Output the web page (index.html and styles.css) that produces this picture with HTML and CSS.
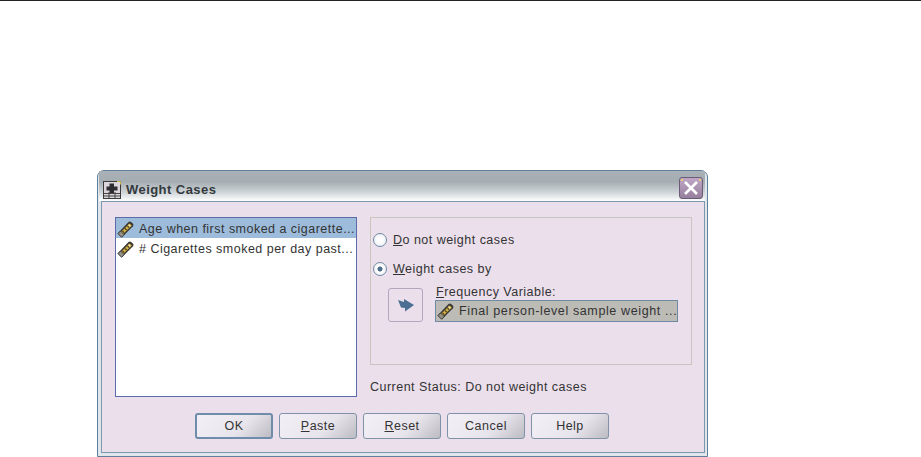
FILE: index.html
```html
<!DOCTYPE html>
<html lang="en">
<head>
    <meta charset="UTF-8">
    <title>Weight Cases</title>
    <link rel="stylesheet" href="styles.css">
</head>
<body>
<svg class="defs" width="0" height="0">
    <symbol id="ruler" viewBox="0 0 17 17">
        <path d="M.5 12.5 L11.5 1 Q13 0 14.2 1 L16 2.8 Q17 4 16 5.2 L4.8 16.5 Z" fill="#3b3a36"/>
        <path d="M2.5 12.5 L12.6 2.4 L14.8 4.4 L4.6 14.6 Z" fill="#d6b23f"/>
        <path d="M5.5 10 L7.2 11.7 M8 7.5 L9.7 9.2 M10.5 5 L12.2 6.7" stroke="#4a4130" stroke-width="1.2"/>
        <path d="M11.5 3.6 L13.4 5.4" stroke="#f6edb8" stroke-width="1.3"/>
        <path d="M1 12.6 L4.6 16.2 L7.2 13.6 L3.6 10 Z" fill="#95928a" stroke="#37362f" stroke-width=".8"/>
    </symbol>
</svg>
<div class="rule"></div>
<div class="window">
    <div class="titlebar">
        <svg class="app-icon" width="18" height="18" viewBox="0 0 18 18">
            <rect x="0.5" y="0.5" width="17" height="17" fill="#dcd6dc" stroke="#3a3a3a"/>
            <path d="M1 12.5H17M1 15H17M6 11V17M12 11V17" stroke="#444" fill="none"/>
            <path d="M6.5 2.5H11V5.5H14.5V9.5H11V12H6.5V9.5H3.5V5.5H6.5Z" fill="#2c2c32"/>
            <path d="M14 .5H17.5V3.5" stroke="#c9b84a" fill="none"/>
        </svg>
        <span class="title">Weight Cases</span>
        <button class="close">
            <svg width="16" height="16" viewBox="0 0 16 16">
                <path d="M2 2L14 14M14 2L2 14" stroke="#fff" stroke-width="2.6"/>
            </svg>
            <span class="spark spark-left"></span>
            <span class="spark spark-right"></span>
        </button>
    </div>
    <div class="content">
        <div class="main">
            <ul class="varlist">
                <li class="selected"><svg class="ruler"><use href="#ruler"/></svg>Age when first smoked a cigarette...</li>
                <li><svg class="ruler"><use href="#ruler"/></svg># Cigarettes smoked per day past...</li>
            </ul>
            <div class="side">
                <div class="panel">
                    <div class="option">
                        <span class="radio"></span>
                        <label><u>D</u>o not weight cases</label>
                    </div>
                    <div class="option">
                        <span class="radio checked"></span>
                        <label><u>W</u>eight cases by</label>
                    </div>
                    <div class="freq">
                        <button class="move">
                            <svg width="18" height="14" viewBox="0 0 18 14">
                                <path d="M1 2L7 4V1L17 7L8 13.5V10L4 9.5Z" fill="#4a6f92"/>
                            </svg>
                        </button>
                        <div class="freq-col">
                            <div class="freq-label"><u>F</u>requency Variable:</div>
                            <div class="field"><svg class="ruler"><use href="#ruler"/></svg>Final person-level sample weight ...</div>
                        </div>
                    </div>
                </div>
                <div class="status">Current Status: Do not weight cases</div>
            </div>
        </div>
        <div class="buttons">
            <button class="btn default">OK</button>
            <button class="btn"><u>P</u>aste</button>
            <button class="btn"><u>R</u>eset</button>
            <button class="btn">Cancel</button>
            <button class="btn">Help</button>
        </div>
    </div>
</div>
</body>
</html>
```
FILE: styles.css
```css
*{margin:0;padding:0;list-style:none;box-sizing:border-box;}
body{
    background:#fff;
    font:12.5px "Liberation Sans",Arial,sans-serif;
    letter-spacing:.48px;
    color:#333;
    overflow:hidden;
}
.defs{display:block;height:0;}
.rule{height:1px;background:#222;}
.window{
    width:611px;
    height:287px;
    margin:169px 0 0 97px;
    border:1px solid #5f7f9c;
    border-radius:7px 7px 0 0;
    background:#dfe6ec;
    padding:0 2px 3px 3px;
    display:flex;
    flex-direction:column;
}
.titlebar{
    height:30px;
    flex:none;
    display:flex;
    align-items:center;
    padding:7px 2px 0 1px;
    margin-left:-2px;
    background:linear-gradient(#a9b1b6 0,#a4adb2 35%,#cdd3d6 70%,#f1f3f4 92%,#fff 100%);
}
.app-icon{margin:0 5px 0 3px;}
.title{font-size:13px;font-weight:bold;color:#33393d;flex:1;letter-spacing:.45px;}
.close{
    position:relative;
    width:24px;
    height:22px;
    margin-bottom:3px;
    border:1px solid #6d5c78;
    border-radius:3px;
    background:linear-gradient(#c0a6c6,#96809e);
    display:flex;
    align-items:center;
    justify-content:center;
}
.spark{position:absolute;top:1px;width:2px;height:2px;background:#e5cf6b;}
.spark-left{left:1px;}
.spark-right{right:1px;}
.content{
    flex:1;
    background:#ebdfeb;
    border:1px solid #7d97ae;
    padding:15px 14px 0 13px;
    display:flex;
    flex-direction:column;
}
.main{display:flex;gap:13px;}
.varlist{
    flex:none;
    width:242px;
    height:180px;
    background:#fff;
    border:1px solid #5a6ba8;
}
.varlist li{
    height:20px;
    padding:2px 0 0 1px;
    display:flex;
    align-items:center;
    white-space:nowrap;
    overflow:hidden;
}
.varlist li.selected{background:#9dbcdb;}
.ruler{width:17px;height:17px;margin-right:5px;flex:none;}
.side{flex:1;}
.panel{
    height:148px;
    border:1px solid #c9c6c0;
    padding:12px 13px 0 2px;
}
.option{display:flex;align-items:center;height:19px;margin-bottom:10px;}
.radio{
    width:14px;
    height:14px;
    border-radius:50%;
    border:1px solid #6f8ba3;
    background:radial-gradient(#fff 30%,#e3e4ee);
    margin-right:6px;
    flex:none;
}
.radio.checked{background:radial-gradient(#50708f 0,#50708f 26%,#fff 34%,#e6e6ee);}
.freq{display:flex;margin:-5px 0 0 15px;}
.move{
    width:35px;
    height:34px;
    margin:5px 12px 0 0;
    border:1px solid #b3a6bf;
    border-radius:3px;
    background:#ebdfeb;
    display:flex;
    align-items:center;
    justify-content:center;
}
.freq-label{height:16px;line-height:16px;padding-left:1px;margin-top:1px;}
.field{
    width:243px;
    height:22px;
    background:#bcbbb6;
    border:1px solid #6e8aa5;
    display:flex;
    align-items:center;
    padding-left:1px;
    white-space:nowrap;
    letter-spacing:.62px;
}
.status{margin-top:14px;height:16px;line-height:16px;}
.buttons{display:flex;gap:6px;justify-content:center;margin-top:16px;padding-right:1px;}
.btn{
    width:78px;
    height:26px;
    font:inherit;
    letter-spacing:inherit;
    color:#333;
    border:1px solid #7f93a8;
    border-radius:3px;
    background:linear-gradient(135deg,#f2f0f6 0,#e8e4ec 60%,#bdbcc2 100%);
}
.btn.default{border:2px solid #6f8dab;}
```
